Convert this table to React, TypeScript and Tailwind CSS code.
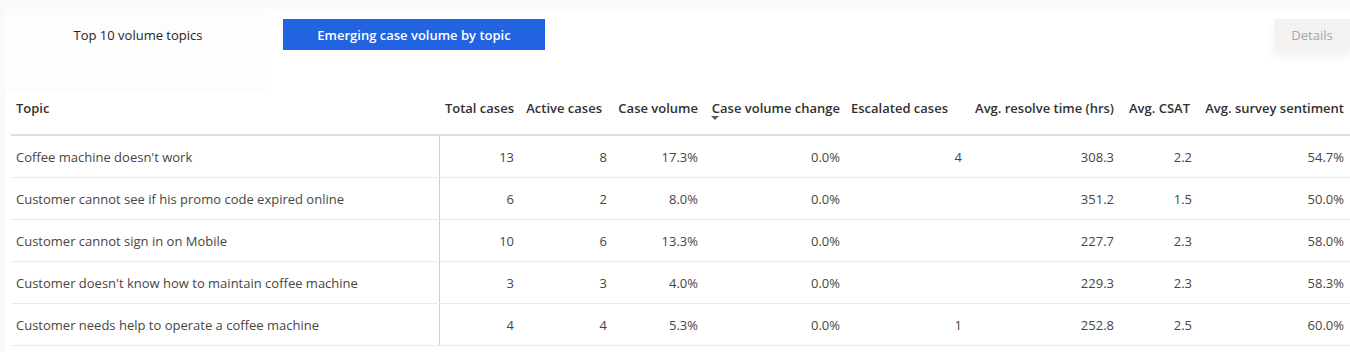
import React from 'react';

type Row = {
  topic: string;
  total: string;
  active: string;
  volume: string;
  change: string;
  escalated: string;
  resolve: string;
  csat: string;
  sentiment: string;
};

const rows: Row[] = [
  { topic: "Coffee machine doesn't work", total: '13', active: '8', volume: '17.3%', change: '0.0%', escalated: '4', resolve: '308.3', csat: '2.2', sentiment: '54.7%' },
  { topic: 'Customer cannot see if his promo code expired online', total: '6', active: '2', volume: '8.0%', change: '0.0%', escalated: '', resolve: '351.2', csat: '1.5', sentiment: '50.0%' },
  { topic: 'Customer cannot sign in on Mobile', total: '10', active: '6', volume: '13.3%', change: '0.0%', escalated: '', resolve: '227.7', csat: '2.3', sentiment: '58.0%' },
  { topic: "Customer doesn't know how to maintain coffee machine", total: '3', active: '3', volume: '4.0%', change: '0.0%', escalated: '', resolve: '229.3', csat: '2.3', sentiment: '58.3%' },
  { topic: 'Customer needs help to operate a coffee machine', total: '4', active: '4', volume: '5.3%', change: '0.0%', escalated: '1', resolve: '252.8', csat: '2.5', sentiment: '60.0%' },
];

const gridCols = 'grid grid-cols-[429px_74px_93px_91px_142px_122px_152px_78px_152px_1fr]';

export default function App() {
  return (
    <div
      className="w-[1350px] h-[352px] overflow-hidden bg-[#faf9f8] pt-[9px] pl-[5px] text-[13px] text-[#323130]"
      style={{ fontFamily: '"Open Sans", "Noto Sans", sans-serif' }}
    >
      <div className="bg-white h-full">
        {/* Tabs + Details */}
        <div className="flex items-start h-[83px]">
          <div className="w-[266px] h-[83px] bg-[#fdfdfd] pt-[10px]">
            <div className="h-[31px] pt-[3px] flex items-center justify-center text-[#252423]">Top 10 volume topics</div>
          </div>
          <button
            type="button"
            className="ml-[12px] mt-[10px] w-[262px] h-[31px] pt-[3px] bg-[#2163e0] text-white font-semibold flex items-center justify-center"
          >
            Emerging case volume by topic
          </button>
          <button
            type="button"
            className="ml-auto mt-[10px] w-[76px] h-[31px] pt-[3px] bg-[#f3f2f1] text-[#a8a6a4] flex items-center justify-center shadow-[0_6px_10px_rgba(0,0,0,0.06)]"
          >
            Details
          </button>
        </div>

        {/* Table */}
        <div className="ml-[6px]">
          <div className={`${gridCols} h-[44px] border-b-2 border-[#e1dfdd] font-semibold text-[#323130]`}>
            <div className="pl-[5px] pt-[6px] leading-[20px]">Topic</div>
            <div className="text-right pt-[6px] leading-[20px]">Total cases</div>
            <div className="text-right pt-[6px] pr-[5px] leading-[20px]">Active cases</div>
            <div className="text-right pt-[6px] leading-[20px]">Case volume</div>
            <div className="pt-[6px] leading-[20px] flex flex-col items-end">
              <span>Case volume change</span>
              <span className="self-start ml-[13px] -mt-[2px] w-0 h-0 border-l-[4px] border-r-[4px] border-t-[4px] border-l-transparent border-r-transparent border-t-[#605e5c]" />
            </div>
            <div className="text-right pt-[6px] pr-[14px] leading-[20px]">Escalated cases</div>
            <div className="text-right pt-[6px] leading-[20px]">Avg. resolve time (hrs)</div>
            <div className="text-right pt-[6px] pr-[2px] leading-[20px]">Avg. CSAT</div>
            <div className="text-right pt-[6px] leading-[20px]">Avg. survey sentiment</div>
            <div />
          </div>

          {rows.map((r) => (
            <div key={r.topic} className={`${gridCols} h-[42px] border-b border-[#edebe9] text-[#484644]`}>
              <div className="pl-[5px] pt-[2px] flex items-center border-r border-[#d2d0ce]">{r.topic}</div>
              <div className="pt-[2px] flex items-center justify-end">{r.total}</div>
              <div className="pt-[2px] flex items-center justify-end">{r.active}</div>
              <div className="pt-[2px] flex items-center justify-end">{r.volume}</div>
              <div className="pt-[2px] flex items-center justify-end">{r.change}</div>
              <div className="pt-[2px] flex items-center justify-end">{r.escalated}</div>
              <div className="pt-[2px] flex items-center justify-end">{r.resolve}</div>
              <div className="pt-[2px] flex items-center justify-end">{r.csat}</div>
              <div className="pt-[2px] flex items-center justify-end">{r.sentiment}</div>
              <div />
            </div>
          ))}
        </div>
      </div>
    </div>
  );
}
